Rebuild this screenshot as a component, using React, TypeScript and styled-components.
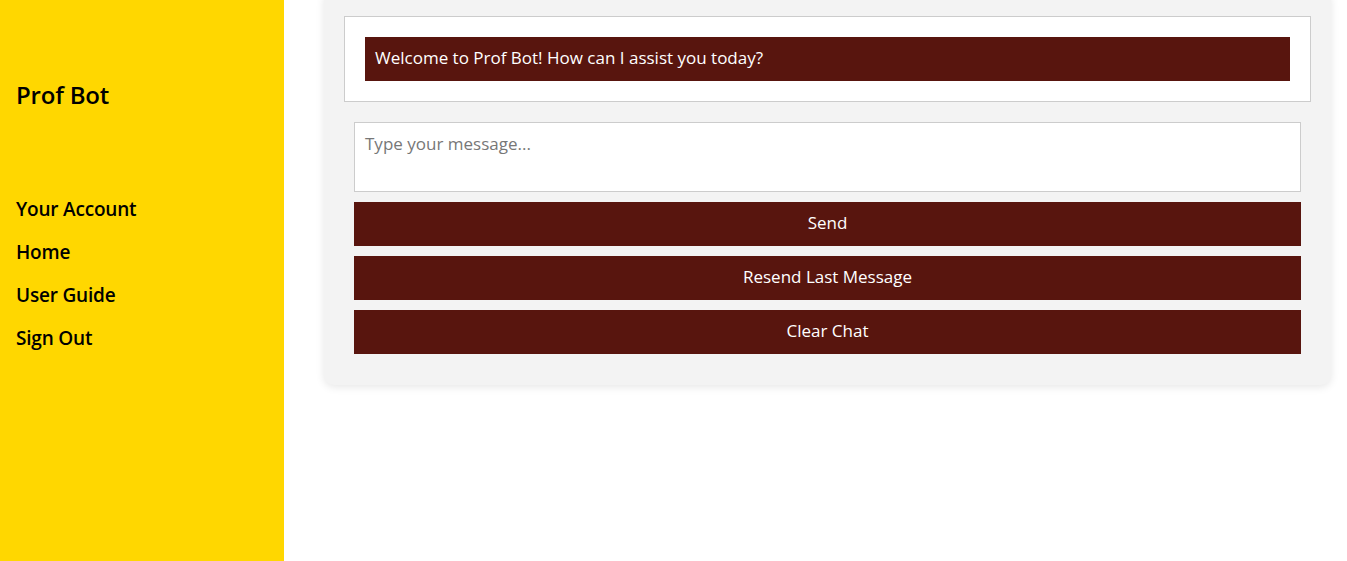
import React from "react";
import styled, { createGlobalStyle } from "styled-components";

const Global = createGlobalStyle`
  html, body { margin: 0; padding: 0; background: #ffffff; }
  body { font-family: "Open Sans", "Noto Sans", sans-serif; overflow: hidden; }
  * { box-sizing: border-box; }
`;

const Layout = styled.div`
  display: flex;
  height: 561px;
`;

const Sidebar = styled.aside`
  width: 284px;
  flex: none;
  background: #ffd700;
  padding: 78px 16px 0;
  color: #000;
`;

const Brand = styled.h1`
  margin: 0;
  font-size: 24px;
  font-weight: 600;
  line-height: 34px;
  letter-spacing: -0.2px;
`;

const Nav = styled.nav`
  display: flex;
  flex-direction: column;
  gap: 15px;
  margin-top: 83px;
`;

const NavLink = styled.a`
  font-size: 19px;
  font-weight: 600;
  line-height: 28px;
  letter-spacing: -0.2px;
  color: #000;
  text-decoration: none;
  cursor: pointer;
`;

const Main = styled.main`
  flex: 1;
  padding: 0 16px 0 40px;
`;

const Card = styled.section`
  margin-top: -10px;
  background: #f3f3f3;
  border-radius: 10px;
  box-shadow: 0 2px 8px rgba(0, 0, 0, 0.1);
  padding: 26px 20px 31px;
`;

const ChatBox = styled.div`
  background: #fff;
  border: 1px solid #cccccc;
  padding: 20px;
  display: flex;
  flex-direction: column;
  gap: 10px;
`;

const Message = styled.div`
  background: #58150e;
  color: #fff;
  font-size: 17px;
  line-height: 24px;
  padding: 9px 10px 11px;
`;

const Form = styled.div`
  display: flex;
  flex-direction: column;
  gap: 10px;
  padding: 20px 10px 0;
`;

const Input = styled.textarea`
  height: 70px;
  border: 1px solid #cccccc;
  background: #fff;
  padding: 9px 10px 10px;
  font-family: inherit;
  font-size: 17px;
  line-height: 24px;
  resize: none;
  outline: none;
  &::placeholder { color: #777; }
`;

const Button = styled.button`
  height: 44px;
  border: none;
  background: #58150e;
  color: #fff;
  font-family: inherit;
  font-size: 17px;
  line-height: 24px;
  padding: 0 0 2px;
  cursor: pointer;
`;

export default function App() {
  return (
    <>
      <Global />
      <Layout>
        <Sidebar>
          <Brand>Prof Bot</Brand>
          <Nav>
            <NavLink>Your Account</NavLink>
            <NavLink>Home</NavLink>
            <NavLink>User Guide</NavLink>
            <NavLink>Sign Out</NavLink>
          </Nav>
        </Sidebar>
        <Main>
          <Card>
            <ChatBox>
              <Message>Welcome to Prof Bot! How can I assist you today?</Message>
            </ChatBox>
            <Form>
              <Input placeholder="Type your message..." />
              <Button>Send</Button>
              <Button>Resend Last Message</Button>
              <Button>Clear Chat</Button>
            </Form>
          </Card>
        </Main>
      </Layout>
    </>
  );
}
